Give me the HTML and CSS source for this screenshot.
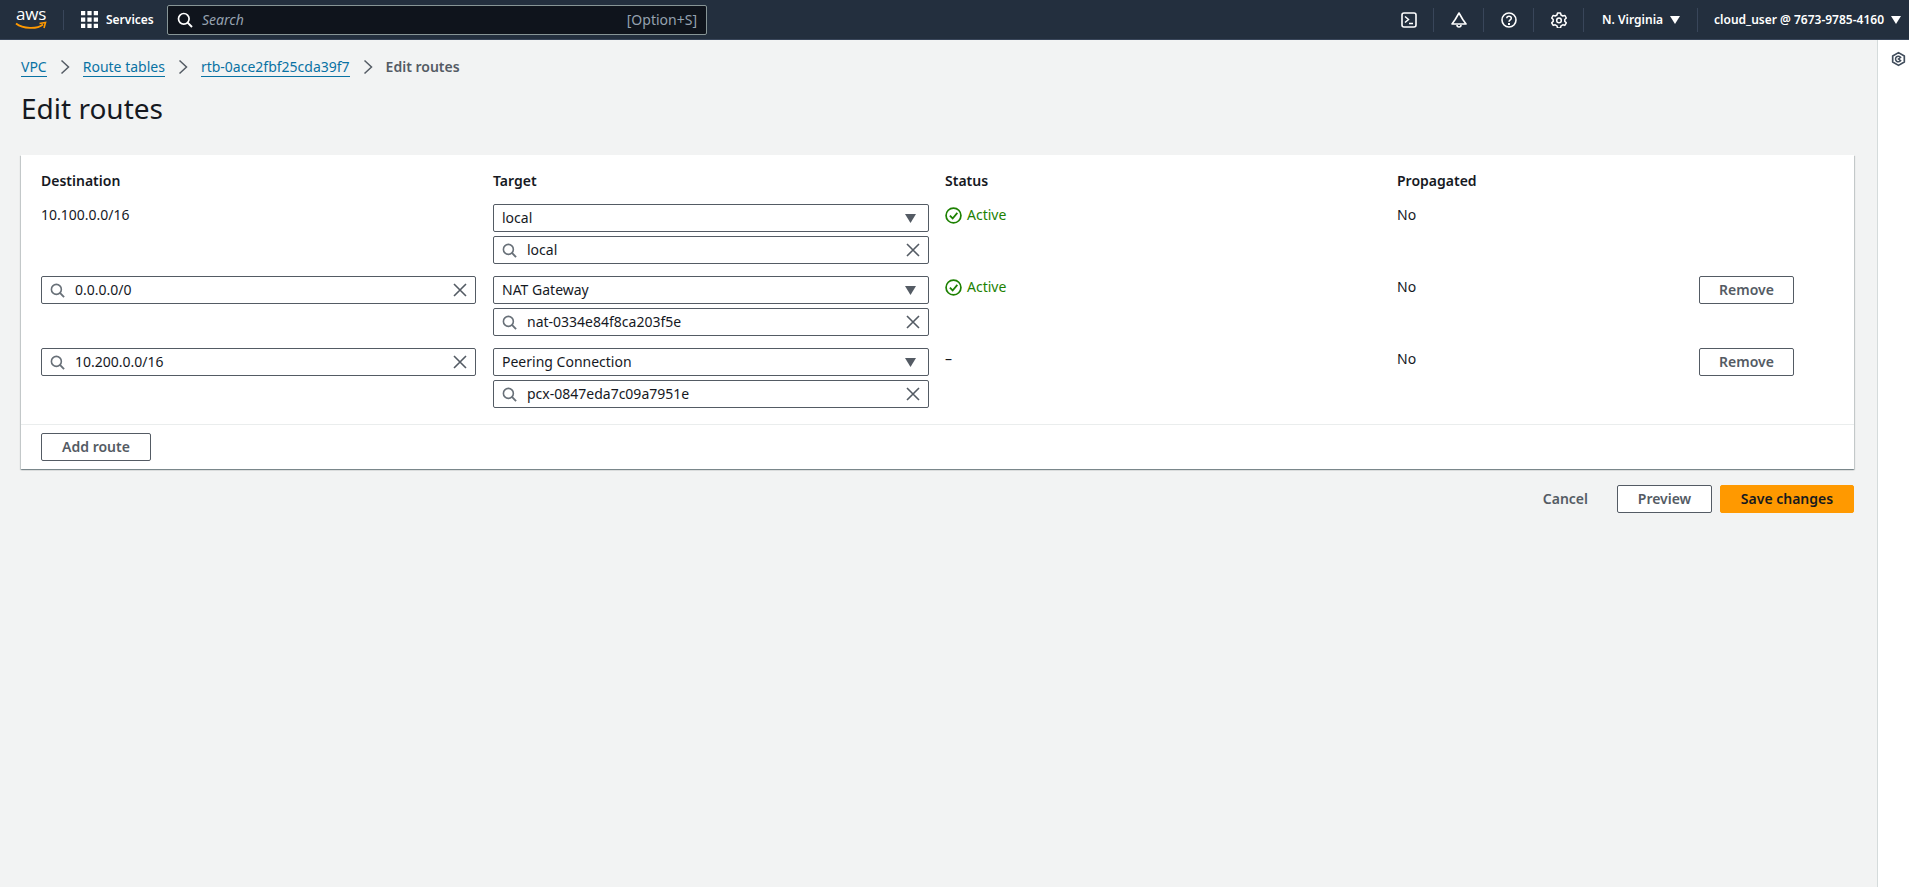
FILE: index.html
```html
<!DOCTYPE html>
<html lang="en">
<head>
<meta charset="utf-8">
<title>Edit routes</title>
<link rel="stylesheet" href="styles.css">
</head>
<body>
<svg class="defs" width="0" height="0" aria-hidden="true">
  <symbol id="i-search" viewBox="0 0 16 16"><circle cx="6.8" cy="6.8" r="5.3" fill="none" stroke="currentColor" stroke-width="1.7"/><path d="M10.6 10.6 15 15" fill="none" stroke="currentColor" stroke-width="2"/></symbol>
  <symbol id="i-x" viewBox="0 0 14 14"><path d="M1 1l12 12M13 1 1 13" fill="none" stroke="currentColor" stroke-width="1.6"/></symbol>
  <symbol id="i-caret" viewBox="0 0 10 8"><path d="M0 0h10L5 8z" fill="currentColor"/></symbol>
  <symbol id="i-check" viewBox="0 0 16 16"><circle cx="8" cy="8" r="7" fill="none" stroke="currentColor" stroke-width="1.6"/><path d="M4.6 8.2 7.2 10.8 11.6 5.6" fill="none" stroke="currentColor" stroke-width="1.7"/></symbol>
  <symbol id="i-chev" viewBox="0 0 10 16"><path d="M1.5 1.5 8.5 8 1.5 14.5" fill="none" stroke="currentColor" stroke-width="1.5"/></symbol>
</svg>

<header class="nav">
  <div class="logo">
    <span class="logo-word">aws</span>
    <svg class="logo-smile" viewBox="0 0 32 10" width="32" height="10"><path d="M1 2.5C8 8 22 8.500 28 3.500" fill="none" stroke="#f90" stroke-width="1.800"/><path d="M24.500 2.500 30.500 1.500 29 7" fill="none" stroke="#f90" stroke-width="1.600"/></svg>
  </div>
  <div class="nav-sep-logo"></div>
  <div class="services">
    <svg class="grid-icon" viewBox="0 0 16 16" width="17" height="17"><path fill="#fff" d="M0 0h4v4H0zM6 0h4v4H6zM12 0h4v4h-4zM0 6h4v4H0zM6 6h4v4H6zM12 6h4v4h-4zM0 12h4v4H0zM6 12h4v4H6zM12 12h4v4h-4z"/></svg>
    <span>Services</span>
  </div>
  <div class="nav-search">
    <svg class="nav-search-icon"><use href="#i-search"/></svg>
    <span class="nav-search-text">Search</span>
    <span class="nav-search-key">[Option+S]</span>
  </div>
  <div class="nav-right">
    <div class="nav-btn">
      <svg viewBox="0 0 16 16" width="16" height="16"><rect x="1" y="1" width="14" height="14" rx="2" fill="none" stroke="#fff" stroke-width="1.600"/><path d="M4 4.500 7.500 7.500 4 10.500M8 11.500h4" fill="none" stroke="#fff" stroke-width="1.500"/></svg>
    </div>
    <div class="nav-btn">
      <svg viewBox="0 0 16 16" width="16" height="16"><path d="M8 1 11.800 7.500 15 12H1L4.200 7.500z" fill="none" stroke="#fff" stroke-width="1.600" stroke-linejoin="round"/><path d="M6 13a2 2 0 0 0 4 0" fill="none" stroke="#fff" stroke-width="1.600"/></svg>
    </div>
    <div class="nav-btn">
      <svg viewBox="0 0 16 16" width="16" height="16"><circle cx="8" cy="8" r="7" fill="none" stroke="#fff" stroke-width="1.600"/><path d="M5.800 6.200C5.800 3.500 10.300 3.500 10.300 6.200 10.300 7.900 8 7.900 8 9.800" fill="none" stroke="#fff" stroke-width="1.500"/><path d="M7 11h2v2H7z" fill="#fff"/></svg>
    </div>
    <div class="nav-btn">
      <svg viewBox="0 0 16 16" width="16" height="16"><path d="M6.500 1h3l.5 2 1.800 1 2-.6 1.500 2.600-1.500 1.500v1.900l1.500 1.400-1.500 2.600-2-.6-1.800 1-.5 2.200h-3L6 13.800l-1.800-1-2 .6L.7 10.800l1.500-1.400V7.500L.7 6l1.500-2.600 2 .6L6 3z" fill="none" stroke="#fff" stroke-width="1.500" stroke-linejoin="round"/><circle cx="8" cy="8.400" r="2.300" fill="none" stroke="#fff" stroke-width="1.500"/></svg>
    </div>
    <div class="nav-menu region"><span>N. Virginia</span><svg class="nav-caret"><use href="#i-caret"/></svg></div>
    <div class="nav-menu user"><span>cloud_user @ 7673-9785-4160</span><svg class="nav-caret"><use href="#i-caret"/></svg></div>
  </div>
</header>

<div class="shell">
  <main class="main">
    <nav class="crumbs">
      <a class="crumb-link">VPC</a>
      <svg class="crumb-chev"><use href="#i-chev"/></svg>
      <a class="crumb-link">Route tables</a>
      <svg class="crumb-chev"><use href="#i-chev"/></svg>
      <a class="crumb-link">rtb-0ace2fbf25cda39f7</a>
      <svg class="crumb-chev"><use href="#i-chev"/></svg>
      <span class="crumb-current">Edit routes</span>
    </nav>
    <h1 class="title">Edit routes</h1>

    <section class="card">
      <div class="card-body">
        <div class="route-grid head">
          <div>Destination</div><div>Target</div><div>Status</div><div>Propagated</div><div></div>
        </div>

        <div class="route-grid">
          <div class="cell-text">10.100.0.0/16</div>
          <div class="stack target">
            <div class="field"><span class="field-text">local</span><svg class="caret"><use href="#i-caret"/></svg></div>
            <div class="field"><svg class="s-icon"><use href="#i-search"/></svg><span class="field-text">local</span><svg class="x-icon"><use href="#i-x"/></svg></div>
          </div>
          <div class="cell-text status"><svg class="check"><use href="#i-check"/></svg>Active</div>
          <div class="cell-text">No</div>
          <div></div>
        </div>

        <div class="route-grid">
          <div class="stack dest">
            <div class="field"><svg class="s-icon"><use href="#i-search"/></svg><span class="field-text">0.0.0.0/0</span><svg class="x-icon"><use href="#i-x"/></svg></div>
          </div>
          <div class="stack target">
            <div class="field"><span class="field-text">NAT Gateway</span><svg class="caret"><use href="#i-caret"/></svg></div>
            <div class="field"><svg class="s-icon"><use href="#i-search"/></svg><span class="field-text">nat-0334e84f8ca203f5e</span><svg class="x-icon"><use href="#i-x"/></svg></div>
          </div>
          <div class="cell-text status"><svg class="check"><use href="#i-check"/></svg>Active</div>
          <div class="cell-text">No</div>
          <button class="btn">Remove</button>
        </div>

        <div class="route-grid">
          <div class="stack dest">
            <div class="field"><svg class="s-icon"><use href="#i-search"/></svg><span class="field-text">10.200.0.0/16</span><svg class="x-icon"><use href="#i-x"/></svg></div>
          </div>
          <div class="stack target">
            <div class="field"><span class="field-text">Peering Connection</span><svg class="caret"><use href="#i-caret"/></svg></div>
            <div class="field"><svg class="s-icon"><use href="#i-search"/></svg><span class="field-text">pcx-0847eda7c09a7951e</span><svg class="x-icon"><use href="#i-x"/></svg></div>
          </div>
          <div class="cell-text">–</div>
          <div class="cell-text">No</div>
          <button class="btn">Remove</button>
        </div>
      </div>
      <div class="card-foot"><button class="btn add">Add route</button></div>
    </section>

    <div class="actions">
      <button class="btn-link">Cancel</button>
      <button class="btn preview">Preview</button>
      <button class="btn-primary">Save changes</button>
    </div>
  </main>
  <aside class="panel">
    <svg class="panel-icon" viewBox="0 0 16 16" width="15" height="16"><path d="M8 1.200 14.200 4.700V11.300L8 14.800 1.800 11.300V4.700z" fill="none" stroke="#414d5c" stroke-width="1.800" stroke-linejoin="round"/><path d="M10.300 6.300A3 3 0 1 0 10.300 9.700L8 8z" fill="none" stroke="#414d5c" stroke-width="1.600"/></svg>
  </aside>
</div>
</body>
</html>
```
FILE: styles.css
```css
* { box-sizing: border-box; }
html, body { margin: 0; height: 100%; }
body {
  font-family: "Noto Sans", "Open Sans", "Liberation Sans", sans-serif;
  font-size: 14px;
  line-height: 22px;
  color: #16191f;
  background: #f2f3f3;
  display: flex;
  flex-direction: column;
  overflow: hidden;
}
.defs { position: absolute; }

/* top nav */
.nav {
  height: 40px;
  flex: none;
  display: flex;
  align-items: center;
  background: #232f3e;
  color: #fff;
  font-size: 12px;
  border-bottom: 1px solid #39465a;
}
.logo { width: 63px; padding-left: 15px; display: flex; flex-direction: column; align-items: flex-start; }
.logo-word { font-family: "Open Sans", sans-serif; font-size: 17px; line-height: 12px; margin-left: 1px; letter-spacing: -.2px; }
.logo-smile { margin-top: 1px; display: block; }
.nav-sep-logo { width: 1px; height: 20px; background: #39465a; }
.services { display: flex; align-items: center; gap: 8px; width: 103px; padding-left: 17px; font-weight: 600; }
.grid-icon { flex: none; }
.nav-search {
  width: 540px;
  height: 30px;
  display: flex;
  align-items: center;
  background: #0f141c;
  border: 1px solid #879596;
  border-radius: 2px;
  color: #95a1af;
  font-size: 14px;
  padding: 0 9px;
}
.nav-search-icon { width: 16px; height: 16px; color: #fff; flex: none; margin-right: 9px; }
.nav-search-text { font-style: italic; flex: 1; }
.nav-search-key { font-size: 14px; }
.nav-right { margin-left: auto; display: flex; align-items: center; height: 24px; }
.nav-btn {
  width: 50px;
  height: 24px;
  display: flex;
  align-items: center;
  justify-content: center;
  border-right: 1px solid #39465a;
}
.nav-menu { display: flex; align-items: center; gap: 7px; height: 24px; font-weight: 600; }
.region { padding: 0 17px 0 18px; border-right: 1px solid #39465a; }
.user { padding: 0 8px 0 16px; }
.nav-caret { width: 10px; height: 8px; color: #fff; }

/* page */
.shell { flex: 1; display: flex; min-height: 0; }
.main { flex: 1; padding: 16px 23px 0 21px; min-width: 0; }
.panel { width: 32px; flex: none; background: #fff; border-left: 1px solid #d5dbdb; padding: 11px 0 0 13px; }
.panel-icon { display: block; }

.crumbs { display: flex; align-items: center; height: 22px; }
.crumb-link { color: #0972a3; border-bottom: 1px solid #0972a3; line-height: 20px; height: 20px; }
.crumb-chev { width: 10px; height: 16px; color: #545b64; margin: 0 13px 0 13px; flex: none; }
.crumb-current { color: #545b64; font-weight: 600; }
.title { margin: 12px 0 0; font-size: 28px; line-height: 36px; font-weight: 400; color: #16191f; }

.card {
  margin-top: 29px;
  background: #fff;
  box-shadow: 0 1px 1px 0 rgba(0, 28, 36, .3), 1px 1px 1px 0 rgba(0, 28, 36, .15), -1px 1px 1px 0 rgba(0, 28, 36, .15);
}
.card-body { padding: 15px 20px 16px; display: flex; flex-direction: column; gap: 12px; }
.route-grid { display: grid; grid-template-columns: 452px 452px 452px 302px 95px; }
.head { font-weight: 600; }
.stack { display: flex; flex-direction: column; gap: 4px; }
.dest { padding-right: 17px; }
.target { padding-right: 16px; }
.field {
  height: 28px;
  display: flex;
  align-items: center;
  padding: 0 8px;
  background: #fff;
  border: 1px solid #545b64;
  border-radius: 2px;
}
.field-text { flex: 1; min-width: 0; white-space: nowrap; }
.s-icon { width: 15px; height: 15px; color: #687078; flex: none; margin-right: 10px; }
.x-icon { width: 14px; height: 14px; color: #545b64; flex: none; }
.caret { width: 11px; height: 9px; color: #545b64; flex: none; margin-right: 4px; }
.status { color: #1d8102; display: flex; align-items: flex-start; gap: 5px; }
.check { width: 17px; height: 17px; margin-top: 3px; flex: none; }

.btn, .btn-link, .btn-primary {
  font: 600 14px/20px "Noto Sans", "Open Sans", sans-serif;
  height: 28px;
  padding: 0;
  border-radius: 2px;
  cursor: pointer;
}
.btn { width: 95px; background: #fff; border: 1px solid #545b64; color: #545b64; }
.card-foot { border-top: 1px solid #eaeded; padding: 8px 20px; }
.add { width: 110px; display: block; }
.actions { margin-top: 16px; display: flex; justify-content: flex-end; align-items: center; gap: 8px; }
.btn-link { background: none; border: 0; color: #545b64; margin-right: 21px; }
.btn-primary { width: 134px; background: #ff9900; border: 1px solid #ff9900; color: #16191f; }
```
